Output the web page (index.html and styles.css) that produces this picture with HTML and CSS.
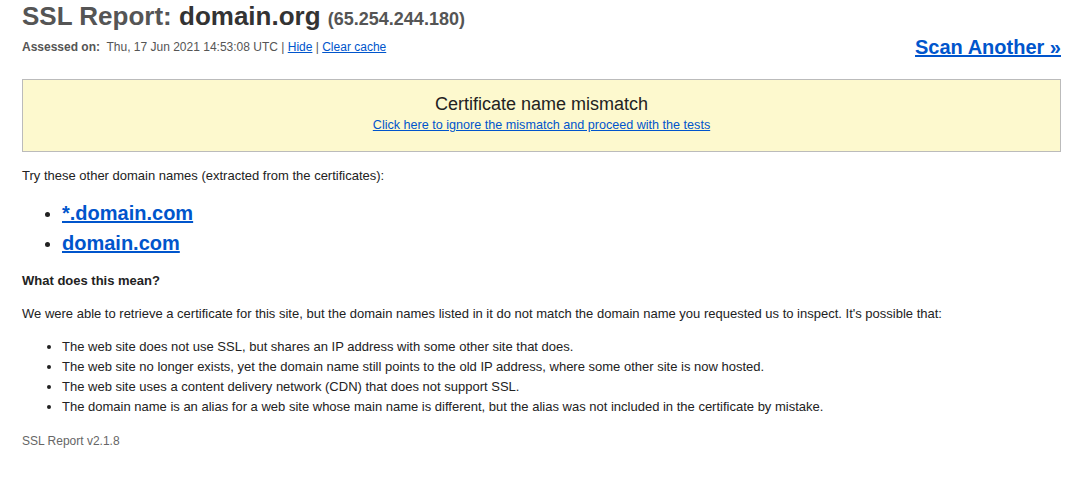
FILE: index.html
```html
<!DOCTYPE html>
<html>
<head>
<meta charset="utf-8">
<link rel="stylesheet" href="styles.css">
<title>SSL Report</title>
</head>
<body>
<div class="page">
  <div class="header">
    <div class="header-left">
      <h1 class="title"><span class="title-label">SSL Report:</span> <span class="title-host">domain.org</span> <span class="title-ip">(65.254.244.180)</span></h1>
      <div class="assessed"><b>Assessed on:</b>&nbsp; Thu, 17 Jun 2021 14:53:08 UTC | <a href="#">Hide</a> | <a href="#">Clear cache</a></div>
    </div>
    <a class="scan-another" href="#">Scan Another »</a>
  </div>

  <div class="warning-box">
    <div class="warning-title">Certificate name mismatch</div>
    <a class="warning-link" href="#">Click here to ignore the mismatch and proceed with the tests</a>
  </div>

  <p class="text try">Try these other domain names (extracted from the certificates):</p>
  <ul class="domains">
    <li><a href="#">*.domain.com</a></li>
    <li><a href="#">domain.com</a></li>
  </ul>

  <p class="text question">What does this mean?</p>
  <p class="text explain">We were able to retrieve a certificate for this site, but the domain names listed in it do not match the domain name you requested us to inspect. It's possible that:</p>
  <ul class="reasons">
    <li>The web site does not use SSL, but shares an IP address with some other site that does.</li>
    <li>The web site no longer exists, yet the domain name still points to the old IP address, where some other site is now hosted.</li>
    <li>The web site uses a content delivery network (CDN) that does not support SSL.</li>
    <li>The domain name is an alias for a web site whose main name is different, but the alias was not included in the certificate by mistake.</li>
  </ul>

  <div class="footer">SSL Report v2.1.8</div>
</div>
</body>
</html>
```

FILE: styles.css
```css
html, body {
  margin: 0;
  padding: 0;
  background: #fff;
}
body {
  font-family: "Liberation Sans", Arial, sans-serif;
  font-size: 12px;
  color: #222;
}
a {
  color: #0055cc;
}
.page {
  padding: 0 27px 0 22px;
}
.header {
  display: flex;
  justify-content: space-between;
  align-items: flex-end;
}
.title {
  margin: 0;
  padding-top: 1px;
  font-size: 26px;
  line-height: 30px;
  font-weight: bold;
}
.title-label {
  color: #555;
}
.title-host {
  color: #333;
}
.title-ip {
  font-size: 18px;
  color: #555;
}
.assessed {
  margin-top: 6px;
  color: #555;
  line-height: 14px;
}
.scan-another {
  font-size: 20px;
  font-weight: bold;
  line-height: 24px;
  margin-bottom: -5px;
}
.warning-box {
  margin-top: 25px;
  height: 58px;
  padding-top: 13px;
  border: 1px solid #bbb;
  background: #fdf9ce;
  display: flex;
  flex-direction: column;
  align-items: center;
}
.warning-title {
  font-size: 18px;
  color: #222;
  line-height: 22px;
}
.warning-link {
  margin-top: 3px;
  font-size: 12.6px;
  line-height: 14px;
}
.text {
  margin: 0;
  font-size: 13px;
  line-height: 15px;
}
.try {
  margin-top: 16px;
}
.domains {
  margin: 15px 0 0 0;
  padding-left: 40px;
  font-size: 20px;
  font-weight: bold;
  line-height: 30px;
  list-style: none;
}
.domains li::before {
  content: "";
  display: inline-block;
  width: 5px;
  height: 5px;
  border-radius: 50%;
  background: #222;
  vertical-align: middle;
  margin-left: -17px;
  margin-right: 12px;
}
.question {
  font-weight: bold;
  margin-top: 15px;
}
.explain {
  margin-top: 18px;
}
.reasons {
  margin: 16px 0 0 0;
  padding-left: 40px;
  font-size: 13px;
  line-height: 20px;
}
.footer {
  margin-top: 17px;
  color: #666;
  line-height: 14px;
}
```
